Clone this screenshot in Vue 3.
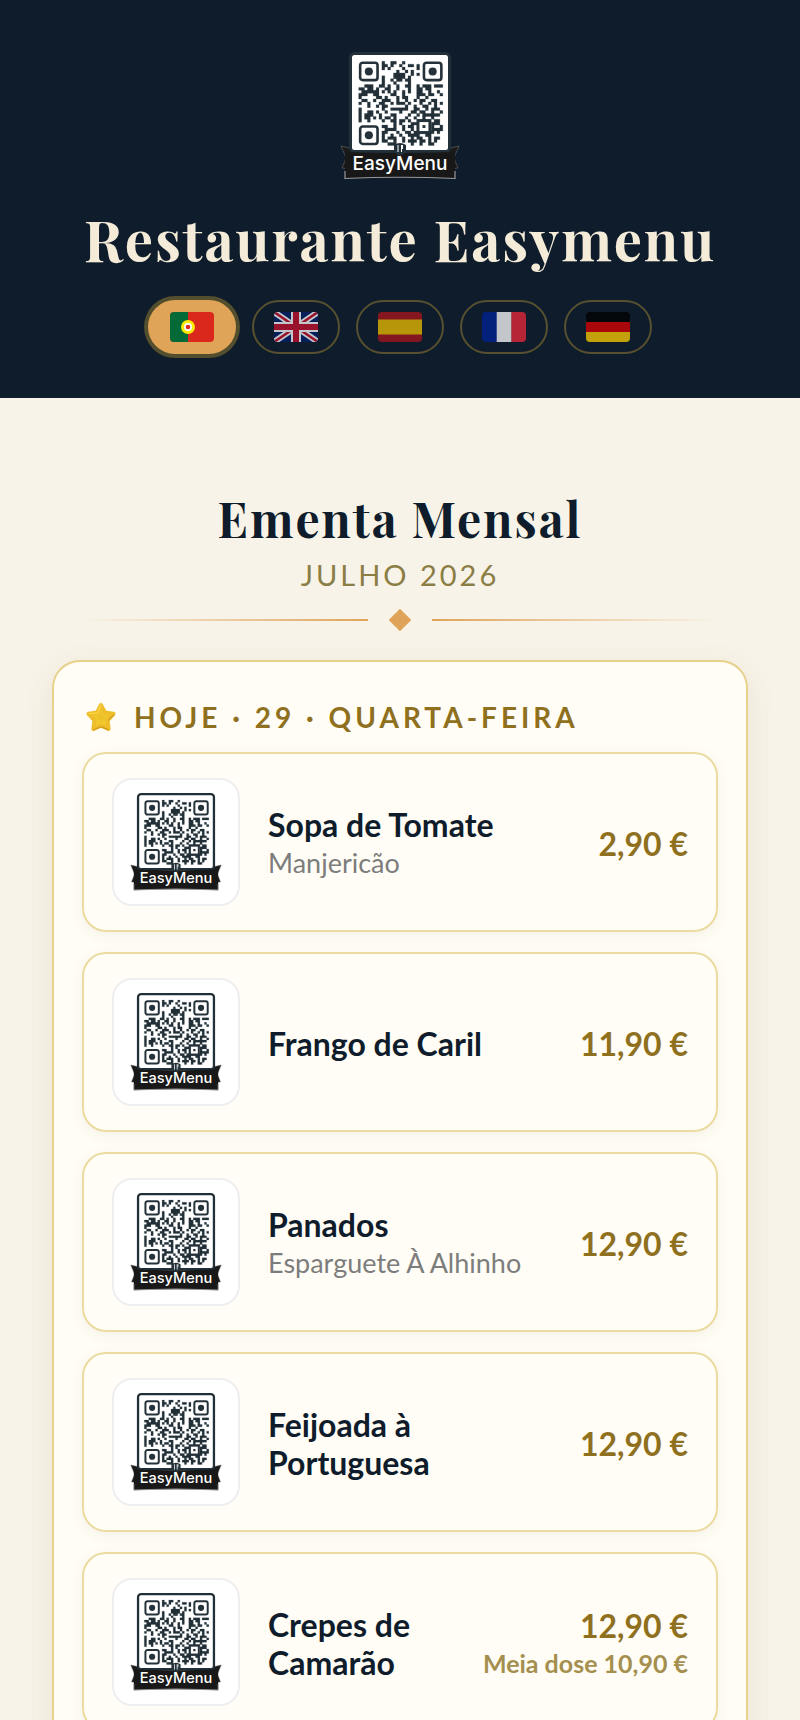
<template>
    <div class="page">
        <!-- Logo partilhado pelo cabeçalho e pelos pratos -->
        <svg class="sprite" aria-hidden="true">
            <symbol id="logo" viewBox="0 0 120 130">
                <path d="M1 95 L14 98 V119 L2 117 L6 107 Z M119 95 L106 98 V119 L118 117 L114 107 Z" fill="#1b1b1b" stroke="#666" stroke-width=".6" />
                <rect x="10.5" y="2.5" width="99" height="98" rx="4" fill="#fff" stroke="#22303a" stroke-width="3" />
                <g transform="translate(18.7 10.3) scale(2.9)">
                    <path :d="qrPath" fill="#25323a" stroke="#25323a" stroke-width=".08" />
                    <g v-for="f in finders" :key="f.join()" :transform="`translate(${f[0]} ${f[1]})`">
                        <rect x=".5" y=".5" width="6" height="6" rx=".9" fill="#fff" stroke="#25323a" stroke-width=".9" />
                        <circle cx="3.5" cy="3.5" r="1.4" fill="#25323a" />
                    </g>
                    <rect x="20.5" y="20.5" width="4" height="4" fill="#fff" stroke="#25323a" stroke-width=".9" />
                    <rect x="22" y="22" width="1" height="1" fill="#25323a" />
                </g>
                <path d="M5 101 Q60 103 115 101 V128 Q60 125 5 128 Z" fill="#181818" />
                <path d="M5 120 V127.5 Q60 125 115 127.5 V120" fill="none" stroke="#999" stroke-width="1.2" />
                <path d="M54 94 Q60 90 66 94 V99 Q65 103 60 105 Q55 103 54 99 Z" fill="#22303a" />
                <path d="M58 94 V101 M61.5 94 V101 M62.5 94 V98" stroke="#fff" stroke-width="1" />
            </symbol>
        </svg>

        <header class="header">
            <svg class="logo" viewBox="0 0 120 130">
                <use href="#logo" />
                <text x="60" y="119" class="logo-text">EasyMenu</text>
            </svg>
            <h1 class="title">Restaurante Easymenu</h1>
            <nav class="langs">
                <button v-for="lang in langs" :key="lang.code" type="button" :aria-label="lang.label"
                    :class="['lang', { active: current === lang.code }]" @click="current = lang.code">
                    <svg v-if="lang.code === 'pt'" class="flag" viewBox="0 0 44 30">
                        <rect width="44" height="30" fill="#da291c" />
                        <rect width="18" height="30" fill="#046a38" />
                        <circle cx="18" cy="15" r="7" fill="#ffe900" />
                        <circle cx="18" cy="15" r="4" fill="#fff" />
                        <circle cx="18" cy="15" r="2.3" fill="#da291c" />
                    </svg>
                    <svg v-else-if="lang.code === 'en'" class="flag" viewBox="0 0 44 30">
                        <rect width="44" height="30" fill="#012169" />
                        <path d="M0 0 L44 30 M44 0 L0 30" stroke="#fff" stroke-width="6" />
                        <path d="M0 0 L44 30 M44 0 L0 30" stroke="#c8102e" stroke-width="2.5" />
                        <path d="M22 0 V30 M0 15 H44" stroke="#fff" stroke-width="10" />
                        <path d="M22 0 V30 M0 15 H44" stroke="#c8102e" stroke-width="6" />
                    </svg>
                    <svg v-else class="flag" viewBox="0 0 44 30">
                        <rect v-for="(s, i) in lang.stripes" :key="i" :x="s[0]" :y="s[1]" :width="s[2]" :height="s[3]" :fill="s[4]" />
                    </svg>
                </button>
            </nav>
        </header>

        <main class="content">
            <div class="heading">
                <h2 class="heading-title">Ementa Mensal</h2>
                <p class="month">JULHO 2026</p>
                <div class="divider"><span class="line"></span><span class="diamond"></span><span class="line right"></span></div>
            </div>

            <section class="day">
                <h3 class="day-title">
                    <svg class="star" viewBox="0 0 28 28" aria-hidden="true">
                        <defs>
                            <radialGradient id="gold" cx=".5" cy=".5" r=".55">
                                <stop offset="0" stop-color="#e8c024" />
                                <stop offset=".6" stop-color="#f5cb32" />
                                <stop offset="1" stop-color="#e3b024" />
                            </radialGradient>
                        </defs>
                        <path d="M14 3 L17.5 9.8 L25.5 11 L20 17 L21 25 L14 22 L7 25 L8 17 L2.5 11 L10.5 9.8 Z"
                            fill="url(#gold)" stroke="#efbe2b" stroke-width="4" stroke-linejoin="round" />
                        <path d="M14 3 L11 10 L3 11" fill="none" stroke="#ffdc50" stroke-width="1" stroke-linecap="round" />
                        <path d="M7 26 L14 23 L21 26 M26 12 L21 17" fill="none" stroke="#d29a1c" stroke-width="1" stroke-linecap="round" />
                    </svg>
                    <span>HOJE · 29 · QUARTA-FEIRA</span>
                </h3>
                <ul class="dishes">
                    <li v-for="dish in dishes" :key="dish.name" class="dish">
                        <div class="thumb">
                            <svg class="thumb-logo" viewBox="0 0 120 130">
                                <use href="#logo" />
                                <text x="60" y="119" class="logo-text">EasyMenu</text>
                            </svg>
                        </div>
                        <div class="info">
                            <div class="name">{{ dish.name }}</div>
                            <div v-if="dish.side" class="side">{{ dish.side }}</div>
                        </div>
                        <div class="prices">
                            <div class="price">{{ dish.price }}</div>
                            <div v-if="dish.half" class="half">{{ dish.half }}</div>
                        </div>
                    </li>
                </ul>
            </section>
        </main>
    </div>
</template>

<script setup>
import { ref } from 'vue';

const current = ref('pt');

// stripes: x, y, largura, altura, cor
const langs = [
    { code: 'pt', label: 'Português' },
    { code: 'en', label: 'English' },
    { code: 'es', label: 'Español', stripes: [[0, 0, 44, 30, '#aa151b'], [0, 7.5, 44, 15, '#f1bf00']] },
    { code: 'fr', label: 'Français', stripes: [[0, 0, 15, 30, '#002395'], [14.7, 0, 15, 30, '#fff'], [29.4, 0, 15, 30, '#ed2939']] },
    { code: 'de', label: 'Deutsch', stripes: [[0, 0, 44, 10, '#000'], [0, 10, 44, 10, '#dd0000'], [0, 20, 44, 10, '#ffce00']] },
];

const dishes = [
    { name: 'Sopa de Tomate', side: 'Manjericão', price: '2,90 €' },
    { name: 'Frango de Caril', price: '11,90 €' },
    { name: 'Panados', side: 'Esparguete À Alhinho', price: '12,90 €' },
    { name: 'Feijoada à Portuguesa', price: '12,90 €' },
    { name: 'Crepes de Camarão', price: '12,90 €', half: 'Meia dose 10,90 €' },
];

// Módulos do código QR, os três cantos são desenhados à parte
const finders = [[0, 0], [22, 0], [0, 22]];
const qr = [
    '........#..##..#.............',
    '........##.#..#..##.#........',
    '........#.#....#....#........',
    '.............#..#.#..........',
    '............####..#.#........',
    '........#...####.#...........',
    '........#..#.##.##...........',
    '........#...#....#...........',
    '..###..##.#..#..##..#.###.###',
    '##.##.#..##..#...#..##.##....',
    '.######.#.#.#..#.#..##..#..#.',
    '###..##....##..#....###.##..#',
    '#.....##.#...#.##...#..#.....',
    '.##..#..###..#..#..#.##..##..',
    '#..#...##..#.###.#...#..#.#.#',
    '...#..#.##......#..#..##..#..',
    '#.......#..######..##..#.###.',
    '#..##.#..#....#...##.##..#..#',
    '#.###..#...##....#..#.######.',
    '#.##.#.#.##.#...#..#..#..#...',
    '#..#....#..##.##.#..#####.##.',
    '............#.#...###....###.',
    '........##..#..#.##.#....#..#',
    '.........####..#..#.#....####',
    '........##...#..##.#######.#.',
    '........#..#..#..####..##....',
    '........#.###..#..#.##..#.##.',
    '........##..#..#.###.##.#.#..',
    '..........###.....#..#..##...',
];
const qrPath = qr
    .flatMap((row, y) => [...row].map((c, x) => (c === '#' ? `M${x} ${y}h1v1h-1z` : '')))
    .join('');
</script>

<style>
body {
    margin: 0;
    background: #f8f3e8;
}
</style>

<style scoped>
.page {
    min-height: 100vh;
    background: #f8f3e8;
    color: #0f1c2b;
    font-family: Lato, sans-serif;
}

.sprite {
    position: absolute;
    width: 0;
    height: 0;
}

.logo-text {
    font: 500 19px Inter, sans-serif;
    fill: #fff;
    text-anchor: middle;
}

.header {
    display: flex;
    flex-direction: column;
    align-items: center;
    padding: 51px 24px 44px;
    background: #0f1c2b;
}

.logo {
    width: 120px;
    height: 130px;
}

.title {
    margin: 20px 0 24px;
    font: 700 56px/75px 'Playfair Display', 'Liberation Serif', serif;
    letter-spacing: 2px;
    color: #f4ecd8;
    text-align: center;
}

.langs {
    display: flex;
    flex-wrap: wrap;
    justify-content: center;
    gap: 16px;
}

.lang {
    display: flex;
    padding: 10px 20px;
    border: 2px solid #585030;
    border-radius: 27px;
    background: transparent;
    cursor: pointer;
}

.lang.active {
    border-color: #e0a458;
    background: #e0a458;
    box-shadow: 0 0 0 4px #524e2e;
}

.flag {
    width: 44px;
    height: 30px;
    border-radius: 4px;
    opacity: 0.75;
}

.active .flag {
    opacity: 1;
}

.content {
    padding: 86px 52px 0;
}

.heading {
    padding: 0 32px;
    text-align: center;
}

.heading-title {
    margin: 0;
    font: 700 48px/68px 'Playfair Display', 'Liberation Serif', serif;
    letter-spacing: 2px;
}

.month {
    margin: 5px 0 0;
    font-size: 29px;
    line-height: 36px;
    letter-spacing: 3px;
    color: #8b7e45;
}

.divider {
    display: flex;
    align-items: center;
    gap: 24px;
    height: 16px;
    margin-top: 19px;
}

.line {
    flex: 1;
    height: 2px;
    background: linear-gradient(90deg, transparent, #e0a458);
}

.line.right {
    background: linear-gradient(90deg, #e0a458, transparent);
}

.diamond {
    width: 16px;
    height: 16px;
    background: #e0a458;
    transform: rotate(45deg);
}

.day {
    margin-top: 32px;
    padding: 36px 28px 28px;
    border: 2px solid #e7d28c;
    border-radius: 28px;
    background: #fffdf5;
    box-shadow: 0 8px 32px rgba(90, 70, 20, 0.08);
}

.day-title {
    display: flex;
    align-items: center;
    gap: 18px;
    margin: 0 0 16px;
    padding-left: 4px;
    font-size: 28px;
    font-weight: 700;
    line-height: 38px;
    letter-spacing: 4px;
    color: #8f701e;
}

.star {
    width: 30px;
    height: 30px;
}

.dishes {
    display: flex;
    flex-direction: column;
    gap: 20px;
    margin: 0;
    padding: 0;
    list-style: none;
}

.dish {
    display: flex;
    align-items: center;
    gap: 28px;
    padding: 24px 28px;
    border: 2px solid #ecdba0;
    border-radius: 24px;
    background: #fffdf5;
    box-shadow: 0 4px 16px rgba(90, 70, 20, 0.06);
}

.thumb {
    display: flex;
    flex: none;
    align-items: center;
    justify-content: center;
    width: 124px;
    height: 124px;
    border: 2px solid #eeeef1;
    border-radius: 20px;
    background: #fff;
}

.thumb-logo {
    width: 92px;
    height: 100px;
}

.info {
    flex: 1;
    min-width: 0;
    padding-top: 4px;
}

.name {
    font-size: 32px;
    font-weight: 700;
    line-height: 38px;
}

.side {
    font-size: 27px;
    line-height: 38px;
    color: #7d7d7d;
}

.prices {
    flex: none;
    padding-top: 4px;
    text-align: right;
    white-space: nowrap;
}

.price {
    font-size: 32px;
    font-weight: 700;
    line-height: 38px;
    color: #8f701e;
}

.half {
    font-size: 25px;
    font-weight: 700;
    line-height: 36px;
    color: #a58f4e;
}
</style>
